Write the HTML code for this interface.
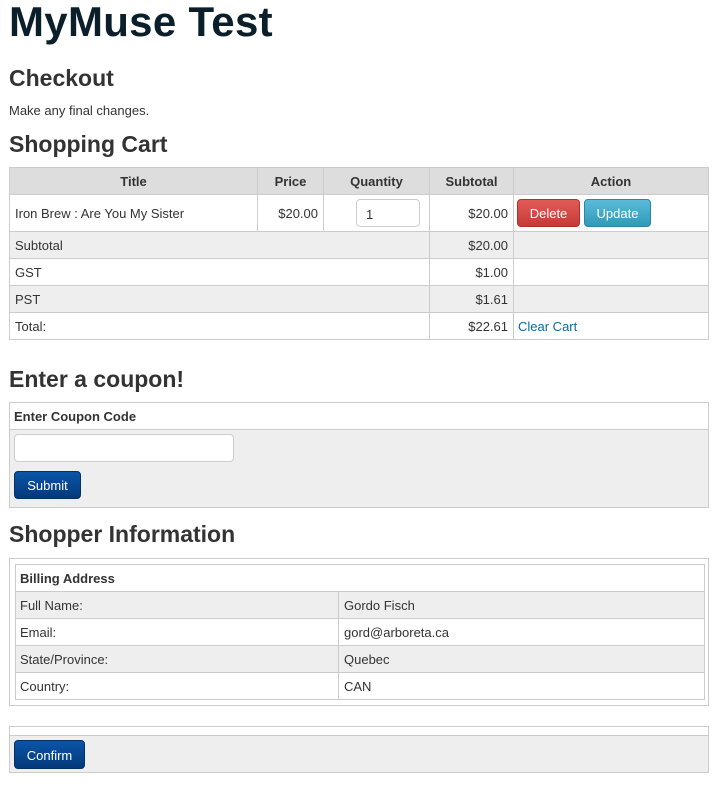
<!DOCTYPE html>
<html><head><style>
*{box-sizing:border-box;margin:0;padding:0}
body{width:713px;height:792px;background:#fff;font-family:"Liberation Sans",Arial,sans-serif;font-size:13px;color:#333;position:relative;overflow:hidden}
.a{position:absolute}
h1,h2{position:absolute;left:9px;font-weight:bold;white-space:nowrap}
h1{font-size:42px;top:-2px;color:#0b1f2b;letter-spacing:0.3px}
h2{font-size:23px;color:#333}
table{border-collapse:collapse;position:absolute;table-layout:fixed}
td,th{border:1px solid #ccc;padding:0 5px;font-size:13px;color:#333}
th{background:#ddd;font-weight:bold;text-align:center}
.g td{background:#eee}
.r{text-align:right}
.btn{position:absolute;border-radius:4px;color:#fff;font-size:13px;text-align:center}
.blue{background:linear-gradient(#0a55a8,#04397a);border:1px solid #033066}
</style></head><body>
<h1>MyMuse Test</h1>
<h2 style="top:65px">Checkout</h2>
<div class="a" style="left:9px;top:103px">Make any final changes.</div>
<h2 style="top:131px">Shopping Cart</h2>
<table style="left:9px;top:167px;width:699px">
<colgroup><col style="width:248px"><col style="width:66px"><col style="width:106px"><col style="width:84px"><col style="width:195px"></colgroup>
<tr style="height:27px"><th>Title</th><th>Price</th><th>Quantity</th><th>Subtotal</th><th>Action</th></tr>
<tr style="height:37px"><td>Iron Brew : Are You My Sister</td><td class="r">$20.00</td><td></td><td class="r">$20.00</td><td></td></tr>
<tr class="g" style="height:27px"><td colspan="3">Subtotal</td><td class="r">$20.00</td><td></td></tr>
<tr style="height:27px"><td colspan="3">GST</td><td class="r">$1.00</td><td></td></tr>
<tr class="g" style="height:27px"><td colspan="3">PST</td><td class="r">$1.61</td><td></td></tr>
<tr style="height:27px"><td colspan="3">Total:</td><td class="r">$22.61</td><td style="padding-left:4px"><span style="color:#0a6aa8">Clear Cart</span></td></tr>
</table>
<div class="a" style="left:356px;top:199px;width:64px;height:28px;border:1px solid #ccc;border-radius:4px;padding:7px 0 0 9px">1</div>
<div class="btn" style="left:517px;top:199px;width:63px;height:28px;line-height:28px;background:linear-gradient(#e35b57,#c53a36);border:1px solid #b0302c">Delete</div>
<div class="btn" style="left:584px;top:199px;width:67px;height:28px;line-height:28px;background:linear-gradient(#5bbbd9,#2f9ab9);border:1px solid #2a86a3">Update</div>

<h2 style="top:366px">Enter a coupon!</h2>
<div class="a" style="left:9px;top:402px;width:700px;height:106px;border:1px solid #ccc;background:#eee">
<div style="height:27px;background:#fff;border-bottom:1px solid #ccc;font-weight:bold;padding:6px 0 0 4px">Enter Coupon Code</div>
</div>
<div class="a" style="left:14px;top:434px;width:220px;height:28px;border:1px solid #ccc;border-radius:4px;background:#fff"></div>
<div class="btn blue" style="left:14px;top:471px;width:67px;height:28px;line-height:28px">Submit</div>

<h2 style="top:521px">Shopper Information</h2>
<div class="a" style="left:9px;top:558px;width:700px;height:148px;border:1px solid #ccc"></div>
<table style="left:15px;top:564px;width:689px">
<colgroup><col style="width:323px"><col style="width:366px"></colgroup>
<tr style="height:27px"><td colspan="2" style="font-weight:bold;padding-left:4px">Billing Address</td></tr>
<tr class="g" style="height:27px"><td style="padding-left:4px">Full Name:</td><td>Gordo Fisch</td></tr>
<tr style="height:27px"><td style="padding-left:4px">Email:</td><td>gord@arboreta.ca</td></tr>
<tr class="g" style="height:27px"><td style="padding-left:4px">State/Province:</td><td>Quebec</td></tr>
<tr style="height:27px"><td style="padding-left:4px">Country:</td><td>CAN</td></tr>
</table>

<div class="a" style="left:9px;top:726px;width:700px;height:47px;border:1px solid #ccc;background:#eee">
<div style="height:9px;background:#fff;border-bottom:1px solid #ccc"></div>
</div>
<div class="btn blue" style="left:14px;top:740px;width:71px;height:29px;line-height:29px">Confirm</div>
</body></html>
